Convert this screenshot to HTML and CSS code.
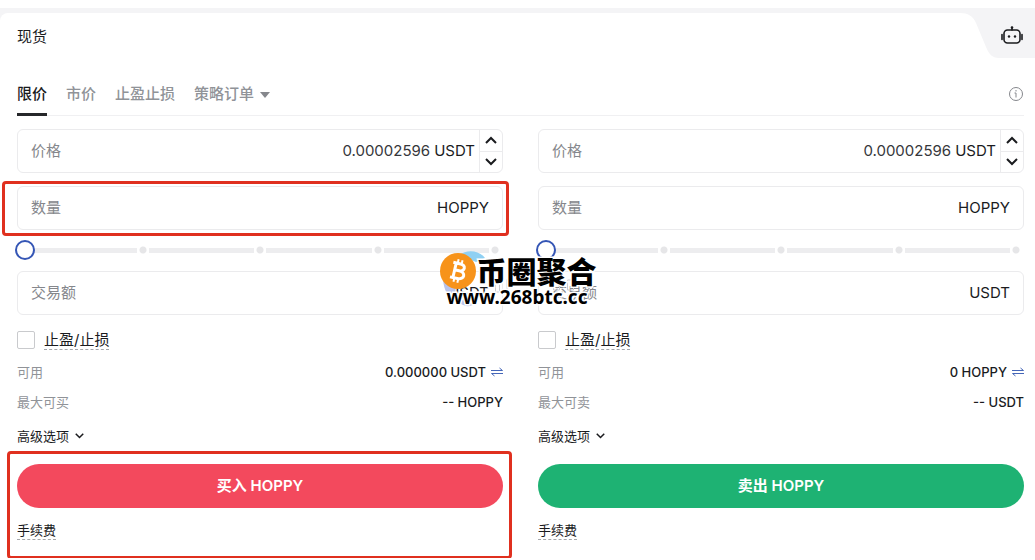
FILE: index.html
```html
<!DOCTYPE html>
<html lang="zh-CN">
    <head>
        <meta charset="UTF-8">
        <meta name="viewport" content="width=device-width, initial-scale=1">
        <link rel="stylesheet" href="styles.css">
        <title>现货</title>
    </head>
    <body>
        <svg class="defs" width="0" height="0" aria-hidden="true">
            <symbol id="up" viewBox="0 0 12 8"><path d="M1 7l5-5 5 5" /></symbol>
            <symbol id="down" viewBox="0 0 12 8"><path d="M1 1l5 5 5-5" /></symbol>
            <symbol id="swap" viewBox="0 0 12 10"><path d="M0 3.5h11.5L8.5 1M12 6.500H.5L3.500 9" /></symbol>
        </svg>
        <div class="strip"></div>
        <main class="panel">
            <header class="head">
                <h1>现货</h1>
                <button class="robot" aria-label="机器人">
                    <svg viewBox="0 0 75 45" width="75" height="45">
                        <path fill="#f4f4f6" d="M0 0C8 0 13 3 16 10L26 34C29 41 32 45 39 45H75V0Z" />
                        <g fill="none" stroke="#1a1b1e" stroke-width="1.600" stroke-linecap="round">
                            <rect x="44" y="17" width="16" height="13" rx="3.500" />
                            <path d="M52 17v-2.500M42 21.500v5M62 21.500v5" />
                        </g>
                        <circle cx="52" cy="14.500" r="1.300" fill="#1a1b1e" />
                        <circle cx="49" cy="23.500" r="1.200" fill="#1a1b1e" />
                        <circle cx="55" cy="23.500" r="1.200" fill="#1a1b1e" />
                    </svg>
                </button>
            </header>
            <nav class="tabs">
                <button class="tab active">限价</button>
                <button class="tab">市价</button>
                <button class="tab">止盈止损</button>
                <button class="tab more">策略订单</button>
                <button class="info" aria-label="说明">
                    <svg viewBox="0 0 16 16" width="16" height="16" fill="none" stroke="#85878c">
                        <circle cx="8" cy="8" r="6.500" />
                        <path d="M6.500 7H8v4.500M8 4v1.500" />
                    </svg>
                </button>
            </nav>
            <div class="sides">
                <form class="side">
                    <div class="field price">
                        <label for="buy-price">价格</label>
                        <input id="buy-price" type="text" value="0.00002596" autocomplete="off">
                        <span class="unit">USDT</span>
                        <div class="stepper">
                            <button type="button" aria-label="加"><svg class="arrow"><use href="#up" /></svg></button>
                            <button type="button" aria-label="减"><svg class="arrow"><use href="#down" /></svg></button>
                        </div>
                    </div>
                    <div class="field marked">
                        <label for="buy-amount">数量</label>
                        <input id="buy-amount" type="text" autocomplete="off">
                        <span class="unit">HOPPY</span>
                    </div>
                    <div class="slider">
                        <input type="range" min="0" max="100" value="0" aria-label="买入比例">
                    </div>
                    <div class="field">
                        <label for="buy-total">交易额</label>
                        <input id="buy-total" type="text" autocomplete="off">
                        <span class="unit">USDT</span>
                    </div>
                    <div class="check">
                        <input id="buy-tpsl" type="checkbox">
                        <label for="buy-tpsl">止盈/止损</label>
                    </div>
                    <div class="row">
                        <span>可用</span>
                        <b>0.000000 USDT <svg class="swap"><use href="#swap" /></svg></b>
                    </div>
                    <div class="row">
                        <span>最大可买</span>
                        <b>-- HOPPY</b>
                    </div>
                    <button type="button" class="advanced">高级选项 <svg class="arrow small"><use href="#down" /></svg></button>
                    <div class="submit marked">
                        <button type="button" class="buy">买入 HOPPY</button>
                        <a href="#">手续费</a>
                    </div>
                </form>
                <form class="side">
                    <div class="field price">
                        <label for="sell-price">价格</label>
                        <input id="sell-price" type="text" value="0.00002596" autocomplete="off">
                        <span class="unit">USDT</span>
                        <div class="stepper">
                            <button type="button" aria-label="加"><svg class="arrow"><use href="#up" /></svg></button>
                            <button type="button" aria-label="减"><svg class="arrow"><use href="#down" /></svg></button>
                        </div>
                    </div>
                    <div class="field">
                        <label for="sell-amount">数量</label>
                        <input id="sell-amount" type="text" autocomplete="off">
                        <span class="unit">HOPPY</span>
                    </div>
                    <div class="slider">
                        <input type="range" min="0" max="100" value="0" aria-label="卖出比例">
                    </div>
                    <div class="field">
                        <label for="sell-total">交易额</label>
                        <input id="sell-total" type="text" autocomplete="off">
                        <span class="unit">USDT</span>
                    </div>
                    <div class="check">
                        <input id="sell-tpsl" type="checkbox">
                        <label for="sell-tpsl">止盈/止损</label>
                    </div>
                    <div class="row">
                        <span>可用</span>
                        <b>0 HOPPY <svg class="swap"><use href="#swap" /></svg></b>
                    </div>
                    <div class="row">
                        <span>最大可卖</span>
                        <b>-- USDT</b>
                    </div>
                    <button type="button" class="advanced">高级选项 <svg class="arrow small"><use href="#down" /></svg></button>
                    <div class="submit">
                        <button type="button" class="sell">卖出 HOPPY</button>
                        <a href="#">手续费</a>
                    </div>
                </form>
                <!-- 水印 -->
                <div class="watermark">
                    <svg class="coin" viewBox="0 0 160 60" width="160" height="60">
                        <path fill="#8fd0f3" d="M19 5C27-1 39 0 45 8L36 12Z" />
                        <path fill="#b9c3ea" d="M3 30c1 10 5 17 11 21l2-14zM20 53l7-8 8 9c-5 3-10 3-15-1z" />
                        <path fill="none" stroke="#c9cad0" d="M55.500 29v13h4V29M67 29.500V42M113.500 32v8h6v-8zM127.500 30v10h6V30z" />
                        <circle cx="18" cy="21" r="18" fill="#f7931a" />
                        <g transform="rotate(13 18 21)" fill="none" stroke="#fff" stroke-width="3">
                            <path d="M11.500 13.500H19c6 0 6 7 0 7h-4.500M14.500 13v15.500M19 20.500c7.500 0 7.500 8 0 8h-7.500" />
                            <path stroke-width="2" d="M16 9.500V13M20 9.500V13M16 29v3.500M20 29v3.500" />
                        </g>
                    </svg>
                    <div class="name">币圈聚合</div>
                    <div class="site">www.268btc.cc</div>
                </div>
            </div>
        </main>
    </body>
</html>
```
FILE: styles.css
```css
* {
    box-sizing: border-box;
}

body {
    margin: 0;
    background: #fff;
    color: #1a1b1e;
    font: 15px/20px Inter, "Noto Sans CJK SC", sans-serif;
}

button, input {
    font: inherit;
    color: inherit;
    background: none;
    border: 0;
    margin: 0;
    padding: 0;
}

svg {
    display: block;
}

.defs {
    position: absolute;
}

.strip {
    height: 13px;
    border-top: 8px solid #fff;
    background: #f4f4f6;
}

.panel {
    background: linear-gradient(#f4f4f6 8px, #fff 8px);
}

.head {
    display: flex;
    justify-content: space-between;
    align-items: flex-start;
    height: 59px;
    padding-left: 17px;
    border-radius: 8px 0 0 0;
    background: #fff;
}

.head h1 {
    margin: 14px 0 0;
    font-size: 15px;
    font-weight: 400;
}

/* 标签栏 */
.tabs {
    display: flex;
    gap: 19px;
    height: 44px;
    margin: 0 11px 0 17px;
    box-shadow: inset 0 -1px #f0f0f2;
}

.tab {
    padding-bottom: 1px;
    color: #909398;
    font-weight: 500;
}

.tab.active {
    color: #1a1b1e;
    padding: 2px 0 0;
    border-bottom: 3px solid #26272a;
}

.more::after {
    content: "";
    display: inline-block;
    margin-left: 6px;
    border: 5px solid transparent;
    border-top: 6px solid #85878c;
    border-bottom: 0;
    vertical-align: 1px;
}

.info {
    margin-left: auto;
}

.sides {
    position: relative;
    display: grid;
    grid-template-columns: 1fr 1fr;
    gap: 35px;
    padding: 13px 11px 18px 17px;
}

.side {
    display: flex;
    flex-direction: column;
    min-width: 0;
}

.field {
    display: flex;
    align-items: center;
    height: 44px;
    padding: 0 13px;
    border: 1px solid #ebebed;
    border-radius: 6px;
}

.field label {
    color: #85878c;
}

.field input {
    flex: 1;
    min-width: 0;
    margin-right: 4px;
    color: #36373b;
    text-align: right;
    outline: none;
}

.price {
    margin-bottom: 13px;
    padding-right: 0;
}

.stepper {
    align-self: stretch;
    display: flex;
    flex-direction: column;
    width: 23px;
    margin-left: 4px;
    border-left: 1px solid #ebebed;
}

.stepper button {
    flex: 1;
    display: grid;
    place-items: center;
}

.stepper button + button {
    border-top: 1px solid #ebebed;
}

.arrow, .swap {
    fill: none;
    stroke: #1a1b1e;
    stroke-width: 2;
    width: 12px;
    height: 8px;
}

.arrow.small {
    width: 9px;
    height: 6px;
}

/* 红色标注框 */
.marked {
    position: relative;
}

.marked::after {
    content: "";
    position: absolute;
    inset: -6px -7px -7px -16px;
    border: 3px solid #e0301f;
    border-radius: 4px;
    pointer-events: none;
}

.submit.marked::after {
    inset: -13px -9px -19px -10px;
}

/* 滑块 */
.slider {
    height: 40px;
    margin: 0 -2px 1px;
    padding: 0 4px;
    background:
        radial-gradient(circle, #e6e6e8 3px, #fff 4px) 25% 50% / 12px 10px,
        radial-gradient(circle, #e6e6e8 3px, #fff 4px) 50% 50% / 12px 10px,
        radial-gradient(circle, #e6e6e8 3px, #fff 4px) 75% 50% / 12px 10px,
        radial-gradient(circle, #e6e6e8 3px, #fff 4px) 100% 50% / 12px 10px,
        linear-gradient(#ededef, #ededef) 0 50% / 100% 5px;
    background-repeat: no-repeat;
    background-origin: content-box;
}

.slider input {
    display: block;
    appearance: none;
    width: calc(100% + 8px);
    height: 40px;
    margin: 0 -4px;
}

.slider input::-webkit-slider-thumb {
    appearance: none;
    width: 20px;
    height: 20px;
    border: 2px solid #3455b5;
    border-radius: 50%;
    background: #fff;
}

.check {
    display: flex;
    align-items: center;
    gap: 9px;
    height: 50px;
}

.check input {
    appearance: none;
    width: 18px;
    height: 18px;
    border: 1px solid #c9cacd;
    border-radius: 2px;
}

.check label {
    border-bottom: 1px dashed #a5a7ab;
    line-height: 18px;
}

.row {
    display: flex;
    justify-content: space-between;
    align-items: center;
    height: 30px;
    font-size: 13px;
    color: #909398;
}

.check + .row {
    margin-top: -8px;
}

.row b {
    display: flex;
    align-items: center;
    gap: 5px;
    color: #1a1b1e;
    font-weight: 500;
}

.swap {
    height: 10px;
    stroke: #4566b8;
    stroke-width: 1;
}

.advanced {
    display: flex;
    align-items: center;
    gap: 6px;
    height: 38px;
    margin-bottom: 9px;
    font-size: 13px;
}

.submit button {
    display: block;
    width: 100%;
    height: 44px;
    border-radius: 22px;
    color: #fff;
    font-weight: 600;
}

.buy {
    background: #f3495d;
}

.sell {
    background: #1eb273;
}

.submit a {
    display: inline-block;
    margin-top: 13px;
    border-bottom: 1px dashed #a5a7ab;
    color: inherit;
    font-size: 13px;
    line-height: 18px;
    text-decoration: none;
}

/* 水印压在两栏中间 */
.watermark {
    position: absolute;
    top: 134px;
    left: calc(50% - 78px);
    width: 160px;
    color: #000;
    font-weight: 700;
    -webkit-text-stroke: 3px #fff;
    paint-order: stroke fill;
    pointer-events: none;
}

.coin {
    position: absolute;
    top: 0;
    left: 0;
}

.name {
    position: relative;
    margin-left: 37px;
    font-size: 30px;
    line-height: 44px;
    font-weight: 900;
}

.site {
    position: relative;
    margin: -7px 0 0 7px;
    font: 700 19px/20px "Noto Sans", sans-serif;
}
```
